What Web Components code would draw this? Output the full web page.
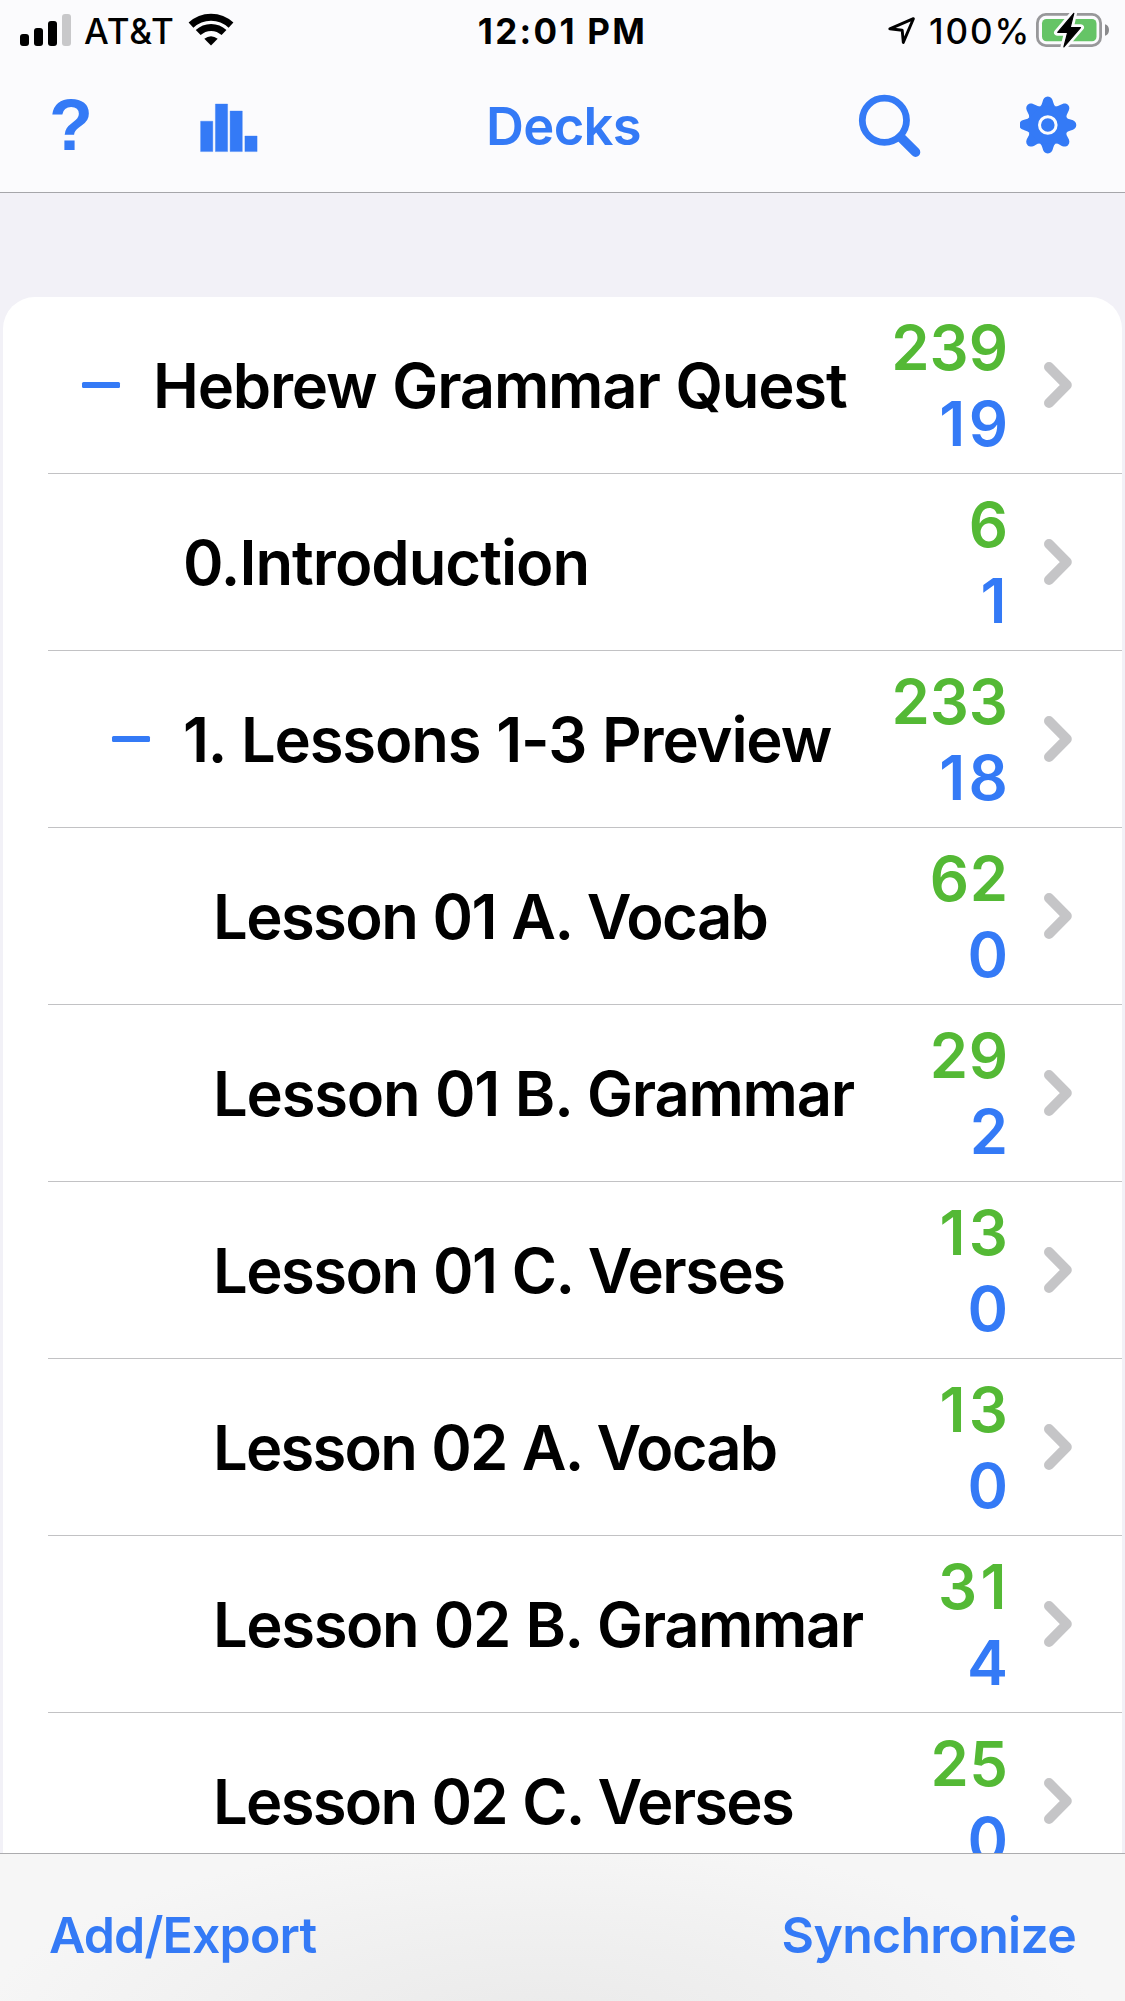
<!DOCTYPE html>
<html lang="en">
<head>
<meta charset="utf-8">
<title>Decks</title>
<style>
  body { margin: 0; --blue: #347af6; --green: #54b935; --page: #f2f1f7; font-family: Inter, "Liberation Sans", sans-serif; color: #000; }
</style>
</head>
<body>
<deck-app>
  <status-bar slot="top" carrier="AT&amp;T" time="12:01 PM" battery="100%"></status-bar>
  <nav-bar slot="top">Decks</nav-bar>
  <deck-list>
    <deck-row level="0" open due="239" fresh="19" tracking="-1.2">Hebrew Grammar Quest</deck-row>
    <deck-row level="1" due="6" fresh="1" tracking="-1">0.Introduction</deck-row>
    <deck-row level="1" open due="233" fresh="18" tracking="-1.15">1. Lessons 1-3 Preview</deck-row>
    <deck-row level="2" due="62" fresh="0" tracking="-1.6">Lesson 01 A. Vocab</deck-row>
    <deck-row level="2" due="29" fresh="2" tracking="-1.25">Lesson 01 B. Grammar</deck-row>
    <deck-row level="2" due="13" fresh="0" tracking="-1.55">Lesson 01 C. Verses</deck-row>
    <deck-row level="2" due="13" fresh="0" tracking="-1.78">Lesson 02 A. Vocab</deck-row>
    <deck-row level="2" due="31" fresh="4" tracking="-1.42">Lesson 02 B. Grammar</deck-row>
    <deck-row level="2" due="25" fresh="0" tracking="-1.75">Lesson 02 C. Verses</deck-row>
  </deck-list>
  <tool-bar slot="bottom"><span slot="left">Add/Export</span><span slot="right">Synchronize</span></tool-bar>
</deck-app>
<script>
class Base extends HTMLElement {
  connectedCallback() {
    if (!this.shadowRoot) this.attachShadow({ mode: "open" }).innerHTML = this.view();
  }
  attr(n) { return (this.getAttribute(n) || "").replace(/&/g, "&amp;"); }
}

customElements.define("deck-app", class extends Base {
  view() { return `<style>
    :host { display: flex; flex-direction: column; width: 1125px; height: 2001px; overflow: hidden; background: var(--page); }
    header { flex: none; height: 192px; background: #fbfbfd; border-bottom: 1px solid #a6a6aa; }
    main { flex: 1; min-height: 0; overflow: hidden; padding: 104px 3px 0; }
    footer { flex: none; }
  </style><header><slot name="top"></slot></header><main><slot></slot></main><footer><slot name="bottom"></slot></footer>`; }
});

customElements.define("status-bar", class extends Base {
  view() { return `<style>
    :host { display: grid; grid-template-columns: 1fr auto 1fr; height: 62px; line-height: 62px; font-size: 35px; font-weight: 500; white-space: nowrap; }
    div { display: flex; }
    svg { display: block; flex: none; }
    .left { padding-left: 20px; }
    .carrier { margin-left: 13px; width: 104px; letter-spacing: .9px; }
    .time { font-weight: 700; letter-spacing: 2.3px; }
    .right { justify-content: flex-end; padding-right: 15px; }
    .pct { margin-left: 13px; width: 107px; letter-spacing: 1.9px; }
  </style>
  <div class="left">
    <svg width="51" height="62" viewBox="20 0 51 62"><rect x="20" y="34" width="9" height="12" rx="3"/><rect x="34" y="28" width="9" height="18" rx="3"/><rect x="48" y="21" width="9" height="25" rx="3"/><rect x="62" y="14" width="9" height="32" rx="3" fill="#c8c8ca"/></svg>
    <span class="carrier">${this.attr("carrier")}</span>
    <svg width="46" height="62" viewBox="188 0 46 62" fill="none" stroke="#000" stroke-width="7"><path d="M191 25.1A29.2 29.2 0 0 1 231 25.1M198.2 32.6A18.6 18.6 0 0 1 224 32.6"/><path d="M211 45.6L204.3 38.8Q211 33.6 217.7 38.8Z" fill="#000" stroke="none"/></svg>
  </div>
  <div class="time">${this.attr("time")}</div>
  <div class="right">
    <svg width="29" height="62" viewBox="887 0 29 62"><path d="M889.8 28.8L913.4 18.7L903.3 42.4L902.2 30.2Z" fill="none" stroke="#000" stroke-width="2.9" stroke-linejoin="round"/></svg>
    <span class="pct">${this.attr("battery")}</span>
    <svg width="74" height="62" viewBox="1036 0 74 62"><rect x="1037.4" y="14.4" width="63.2" height="31.2" rx="8.5" fill="none" stroke="#98989a" stroke-width="2.8"/><rect x="1042" y="19" width="54.5" height="22.3" rx="4.5" fill="#65c466"/><path d="M1105 24.2Q1109 25.5 1109 30T1105 35.8Z" fill="#8a8a8c"/><path d="M1073.8 13L1057.3 32.6H1067.3L1063.7 47L1080.7 27.4H1070.5Z" stroke="#fbfbfd" stroke-width="6.5" stroke-linejoin="round"/><path d="M1073.8 13.4L1057.7 32.4H1067.7L1063.9 46.8L1080.5 27.6H1070.2Z" stroke="#000" stroke-width="1.2" stroke-linejoin="round"/></svg>
  </div>`; }
});

customElements.define("nav-bar", class extends Base {
  view() { return `<style>
    :host { display: grid; grid-template-columns: 1fr auto 1fr; height: 130px; color: var(--blue); fill: var(--blue); stroke: none; }
    div { display: flex; }
    svg { display: block; flex: none; }
    .left { padding-left: 49px; }
    .help { font: 700 72px/127px "Liberation Sans", Arial, sans-serif; width: 151px; }
    .title { font-size: 52.5px; font-weight: 600; line-height: 128px; letter-spacing: -.65px; padding-left: 2px; }
    .right { justify-content: flex-end; gap: 98px; padding-right: 48px; }
  </style>
  <div class="left"><span class="help">?</span>
    <svg width="58" height="130" viewBox="200 62 58 130"><path d="M200.6 121.2h12.2v30.4h-12.2zM215.4 104h12.2v47.6h-12.2zM230.1 111h12.2v40.6h-12.2zM244.9 136h12.2v15.6h-12.2z" stroke="#347af6" stroke-opacity=".35"/></svg></div>
  <div class="title"><slot></slot></div>
  <div class="right">
    <svg width="64" height="130" viewBox="858 62 64 130" fill="none" stroke="#347af6"><circle cx="884.4" cy="120.3" r="22.1" stroke-width="6.8"/><path d="M900.5 137.2L915.6 152.2" stroke-width="9.4" stroke-linecap="round"/></svg>
    <svg width="57" height="130" viewBox="1020 62 57 130"><defs><path id="t" d="M-8 -18.2Q-6 -19.8 -5.4 -22.8C-4.6 -26.4 -3 -28.5 0 -28.5S4.6 -26.4 5.4 -22.8Q6 -19.8 8 -18.2Z"/></defs><g transform="translate(1047.8 125)"><circle r="20"/><use href="#t"/><use href="#t" transform="rotate(45)"/><use href="#t" transform="rotate(90)"/><use href="#t" transform="rotate(135)"/><use href="#t" transform="rotate(180)"/><use href="#t" transform="rotate(225)"/><use href="#t" transform="rotate(270)"/><use href="#t" transform="rotate(315)"/><circle r="8.3" fill="none" stroke="#fbfbfd" stroke-width="3"/></g></svg>
  </div>`; }
});

customElements.define("deck-list", class extends Base {
  view() { return `<style>
    :host { display: flex; flex-direction: column; background: #fff; border-radius: 32px 32px 0 0; }
  </style><slot></slot>`; }
});

customElements.define("deck-row", class extends Base {
  // Digits are proportional, so pairs holding a narrow 1 get extra room.
  count(kind) {
    const n = this.attr(kind);
    const gap = n.length === 3 ? 0 : n.length === 2 && n.includes("1") ? 3.4 : .6;
    const end = n.endsWith("1") ? 2.5 : 1;
    return `<span class="${kind}" style="letter-spacing:${gap}px;margin-right:${end - gap}px">${n}</span>`;
  }
  view() {
    const lv = +this.getAttribute("level");
    return `<style>
    :host { display: flex; flex: none; height: 177px; padding-left: 45px; font-size: 61.5px; font-weight: 600; white-space: nowrap; }
    .row { flex: 1; display: flex; align-items: center; height: 176px; padding-left: ${30 + lv * 30}px; border-bottom: 1px solid #c2c2c4; }
    .mark { width: 38px; margin: 0 37px 0 4px; height: 6.6px; border-radius: 1.5px; box-sizing: border-box; }
    .mark.on { background: var(--blue); }
    .name { flex: 1; margin-left: -4px; padding-top: 1px; line-height: 76px; letter-spacing: ${this.attr("tracking")}px; word-spacing: 1.5px; }
    .counts { display: flex; flex-direction: column; align-items: flex-end; line-height: 76px; padding-top: 1px; }
    .due { color: var(--green); }
    .fresh { color: var(--blue); }
    svg { margin: 0 50px 0 35px; flex: none; }
  </style>
  <div class="row"><span class="mark ${this.hasAttribute("open") ? "on" : ""}"></span><span class="name"><slot></slot></span>
    <span class="counts">${this.count("due")}${this.count("fresh")}</span>
    <svg width="28" height="46" viewBox="0 0 28 46"><path d="M5 5L22.8 23L5 41" fill="none" stroke="#c5c5c7" stroke-width="10" stroke-linecap="round" stroke-linejoin="round"/></svg></div>`; }
});

customElements.define("tool-bar", class extends Base {
  view() { return `<style>
    :host { display: flex; justify-content: space-between; box-sizing: border-box; height: 148px; padding: 15px 49px 0; border-top: 1px solid #acacae; color: var(--blue); font-size: 50px; font-weight: 600; line-height: 132px;
      background: radial-gradient(ellipse 560px 190px at 540px 175px, #eaeaea, #efefef 45%, #f6f6f6 100%); }
    .l { letter-spacing: -.85px; } .r { letter-spacing: -.7px; }
  </style><span class="l"><slot name="left"></slot></span><span class="r"><slot name="right"></slot></span>`; }
});
</script>
</body>
</html>
